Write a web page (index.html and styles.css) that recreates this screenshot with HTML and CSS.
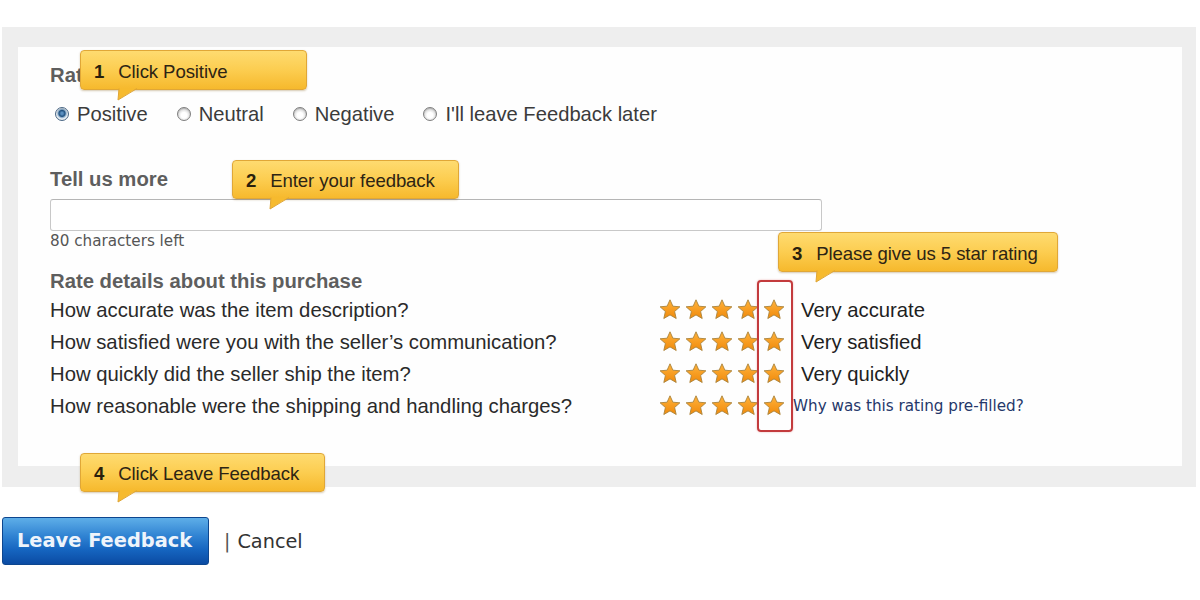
FILE: index.html
```html
<!DOCTYPE html>
<html lang="en">
<head>
<meta charset="utf-8">
<title>Leave Feedback</title>
<link rel="stylesheet" href="styles.css">
</head>
<body>
<svg class="defs" width="0" height="0" aria-hidden="true">
  <defs>
    <linearGradient id="starfill" x1="0" y1="0" x2="0" y2="1">
      <stop offset="0" stop-color="#ffb23a"/>
      <stop offset="1" stop-color="#f08a0c"/>
    </linearGradient>
    <symbol id="star" viewBox="0 0 22 22">
      <polygon points="11,0.8 13.9,7.2 20.9,7.8 15.6,12.5 17.2,19.5 11,15.9 4.8,19.5 6.4,12.5 1.1,7.8 8.1,7.2" fill="url(#starfill)" stroke="#a9833c" stroke-width="0.9" stroke-linejoin="round"/>
    </symbol>
    <symbol id="tail" viewBox="0 0 24 14">
      <polygon points="3,0 21,0 2,12" fill="#f6ba2e"/>
      <polyline points="21,0.5 2,12 3,0.5" fill="none" stroke="#dfa535" stroke-width="1"/>
    </symbol>
  </defs>
</svg>
<div class="page">
  <div class="frame">
    <div class="panel">
      <h2 class="heading">Rate this transaction</h2>
      <div class="radios">
        <label class="radio-opt"><span class="radio radio-on"></span>Positive</label>
        <label class="radio-opt"><span class="radio"></span>Neutral</label>
        <label class="radio-opt"><span class="radio"></span>Negative</label>
        <label class="radio-opt"><span class="radio"></span>I'll leave Feedback later</label>
      </div>
      <h2 class="heading heading-more">Tell us more</h2>
      <div class="textbox"></div>
      <div class="counter">80 characters left</div>
      <h2 class="heading heading-details">Rate details about this purchase</h2>
      <div class="ratings">
        <div class="rating-row">
          <span class="question">How accurate was the item description?</span>
          <span class="stars"><svg class="star"><use href="#star"/></svg><svg class="star"><use href="#star"/></svg><svg class="star"><use href="#star"/></svg><svg class="star"><use href="#star"/></svg><svg class="star"><use href="#star"/></svg></span>
          <span class="answer">Very accurate</span>
        </div>
        <div class="rating-row">
          <span class="question">How satisfied were you with the seller’s communication?</span>
          <span class="stars"><svg class="star"><use href="#star"/></svg><svg class="star"><use href="#star"/></svg><svg class="star"><use href="#star"/></svg><svg class="star"><use href="#star"/></svg><svg class="star"><use href="#star"/></svg></span>
          <span class="answer">Very satisfied</span>
        </div>
        <div class="rating-row">
          <span class="question">How quickly did the seller ship the item?</span>
          <span class="stars"><svg class="star"><use href="#star"/></svg><svg class="star"><use href="#star"/></svg><svg class="star"><use href="#star"/></svg><svg class="star"><use href="#star"/></svg><svg class="star"><use href="#star"/></svg></span>
          <span class="answer">Very quickly</span>
        </div>
        <div class="rating-row">
          <span class="question">How reasonable were the shipping and handling charges?</span>
          <span class="stars"><svg class="star"><use href="#star"/></svg><svg class="star"><use href="#star"/></svg><svg class="star"><use href="#star"/></svg><svg class="star"><use href="#star"/></svg><svg class="star"><use href="#star"/></svg></span>
          <a class="why" href="#">Why was this rating pre-filled?</a>
        </div>
        <div class="highlight"></div>
      </div>
    </div>
  </div>
  <div class="actions">
    <button class="btn-leave" type="button">Leave Feedback</button>
    <span class="sep">|</span>
    <a class="cancel" href="#">Cancel</a>
  </div>

  <div class="tip tip-1"><b>1</b><span>Click Positive</span><svg class="tail"><use href="#tail"/></svg></div>
  <div class="tip tip-2"><b>2</b><span>Enter your feedback</span><svg class="tail"><use href="#tail"/></svg></div>
  <div class="tip tip-3"><b>3</b><span>Please give us 5 star rating</span><svg class="tail"><use href="#tail"/></svg></div>
  <div class="tip tip-4"><b>4</b><span>Click Leave Feedback</span><svg class="tail"><use href="#tail"/></svg></div>
</div>
</body>
</html>
```

FILE: styles.css
```css
* { box-sizing: border-box; }

html, body {
  margin: 0;
  padding: 0;
  background: #ffffff;
}

.defs {
  position: absolute;
  width: 0;
  height: 0;
  overflow: hidden;
}

.page {
  position: relative;
  width: 1200px;
  height: 600px;
  overflow: hidden;
  font-family: "Liberation Sans", Arial, sans-serif;
  color: #2b2b2b;
  padding-top: 27px;
}

.frame {
  margin-left: 2px;
  width: 1194px;
  background: #eeeeee;
  padding: 20px 14px 21px 16px;
}

.panel {
  background: #fefefe;
  height: 419px;
  padding: 16px 0 0 32px;
}

.heading {
  margin: 0;
  font-size: 20.3px;
  line-height: 24px;
  font-weight: 700;
  color: #5e5e5e;
}

.heading-more { margin-top: 41px; }
.heading-details { margin-top: 19px; }

.radios {
  margin-top: 15px;
  height: 24px;
  display: flex;
  align-items: center;
  gap: 29px;
  padding-left: 5px;
}

.radio-opt {
  display: flex;
  align-items: center;
  gap: 8px;
  font-size: 20.2px;
  line-height: 24px;
  color: #3b3b3b;
}

.radio {
  width: 14px;
  height: 14px;
  border-radius: 50%;
  border: 1px solid #7f7f7f;
  background: radial-gradient(circle at 50% 60%, #ffffff 0 30%, #cfcfcf 75%, #b5b5b5 100%);
  box-shadow: inset 0 1px 1px rgba(0, 0, 0, 0.15);
}

.radio-on {
  border-color: #4a6785;
  background: radial-gradient(circle at 50% 45%, #5a8fc0 0 12%, #1f4f7e 34%, #8fb0cd 46%, #eef2f6 62%, #c4ccd4 100%);
}

.textbox {
  margin-top: 8px;
  width: 772px;
  height: 32px;
  border: 1px solid #c8c8c8;
  border-top-color: #b5b5b5;
  border-radius: 3px;
  background: #ffffff;
}

.counter {
  margin-top: 1px;
  font-family: "DejaVu Sans", Verdana, sans-serif;
  font-size: 15.2px;
  line-height: 18px;
  color: #555555;
}

.ratings {
  position: relative;
  margin-top: 1px;
}

.rating-row {
  display: grid;
  grid-template-columns: 609px auto 1fr;
  align-items: center;
  height: 32px;
}

.question {
  font-size: 20.3px;
  line-height: 32px;
  color: #2a2a2a;
}

.stars {
  display: flex;
  gap: 4px;
  align-items: center;
}

.star {
  width: 22px;
  height: 22px;
  display: block;
}

.answer {
  margin-left: 16px;
  font-size: 20.3px;
  line-height: 32px;
  color: #1f1f1f;
}

.why {
  margin-left: 8px;
  font-family: "DejaVu Sans", Verdana, sans-serif;
  font-size: 15.2px;
  line-height: 32px;
  color: #25376a;
  text-decoration: none;
}

.highlight {
  position: absolute;
  left: 707px;
  top: -14px;
  width: 36px;
  height: 152px;
  border: 2px solid #c33b3d;
  border-radius: 4px;
  box-shadow: 0 0 2px rgba(210, 70, 70, 0.45);
}

.actions {
  margin-top: 30px;
  margin-left: 2px;
  display: flex;
  align-items: center;
  font-family: "DejaVu Sans", Verdana, sans-serif;
}

.btn-leave {
  width: 207px;
  height: 48px;
  padding: 0 0 2px 14px;
  text-align: left;
  border: 1px solid #0d468f;
  border-radius: 3px;
  background: linear-gradient(#5eaee8 0%, #2f82d2 40%, #1564bf 70%, #0b4ba3 100%);
  color: #eef4fb;
  font-family: "DejaVu Sans", Verdana, sans-serif;
  font-size: 19.4px;
  font-weight: 700;
  cursor: pointer;
}

.sep {
  margin-left: 15px;
  font-size: 19px;
  color: #555555;
}

.cancel {
  margin-left: 7px;
  font-size: 19.3px;
  color: #333333;
  text-decoration: none;
}

.tip {
  position: absolute;
  z-index: 5;
  display: flex;
  align-items: center;
  gap: 14px;
  padding: 3px 0 0 13px;
  border: 1px solid #e0a737;
  border-radius: 4px;
  background: linear-gradient(#fedb70 0%, #fccd50 50%, #f6b92d 100%);
  box-shadow: 0 1px 2px rgba(120, 80, 0, 0.3);
  font-size: 18.6px;
  color: #2d2414;
  letter-spacing: -0.1px;
}

.tip b {
  font-weight: 700;
  color: #2a1f0c;
}

.tail {
  position: absolute;
  left: 35px;
  top: 100%;
  margin-top: -1px;
  width: 24px;
  height: 14px;
}

.tip-1 { left: 80px; top: 50px; width: 227px; height: 40px; }
.tip-2 { left: 232px; top: 160px; width: 227px; height: 39px; }
.tip-3 { left: 778px; top: 232px; width: 280px; height: 40px; }
.tip-4 { left: 80px; top: 453px; width: 245px; height: 39px; }
```
